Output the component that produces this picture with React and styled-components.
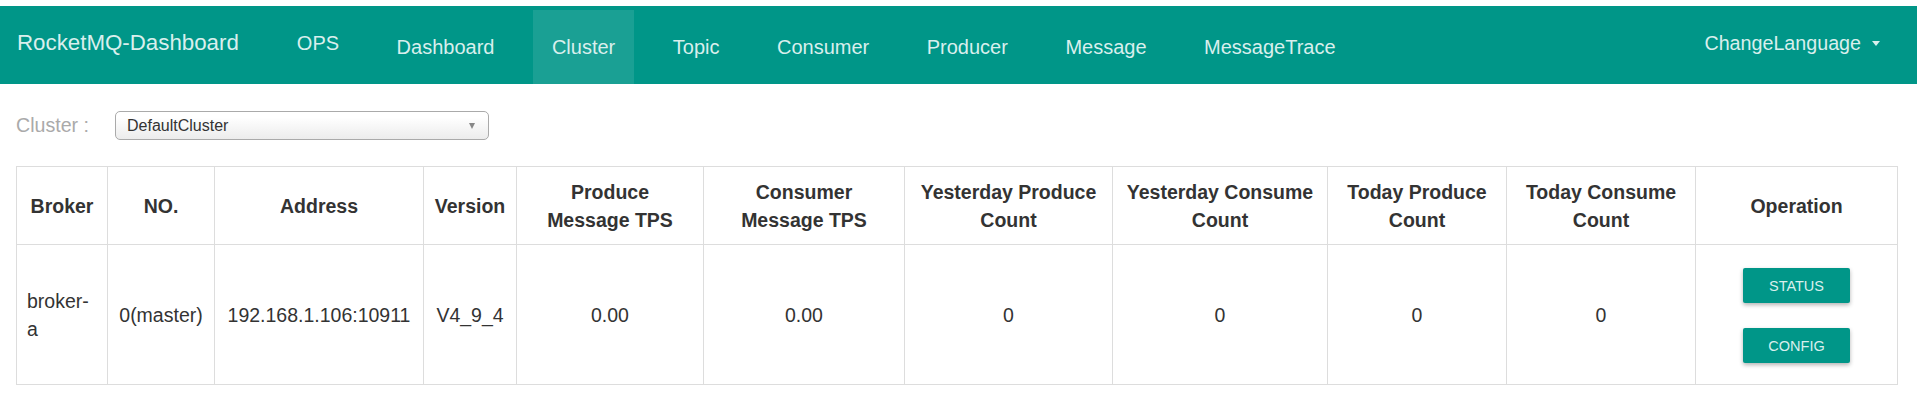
import React from "react";
import styled, { createGlobalStyle } from "styled-components";

const GlobalStyle = createGlobalStyle`
  html, body {
    margin: 0;
    padding: 0;
    background: #fff;
  }
  body {
    font-family: "Liberation Sans", Arial, Helvetica, sans-serif;
    color: #333;
  }
`;

const TEAL = "#009688";
const MINT = "#d9efed";

const Page = styled.div`
  padding-top: 6px;
`;

const Navbar = styled.nav`
  display: flex;
  align-items: stretch;
  height: 78px;
  background: ${TEAL};
  padding: 0 37px 0 17px;
`;

const Brand = styled.a`
  display: flex;
  align-items: center;
  padding-bottom: 4px;
  margin-right: 39px;
  font-size: 22.3px;
  color: ${MINT};
  white-space: nowrap;
`;

const NavList = styled.ul`
  display: flex;
  gap: 19.5px;
  list-style: none;
  margin: 4px 0 0;
  padding: 0;
`;

const NavItem = styled.li`
  display: flex;
  align-items: center;
  padding: 0 19px ${(p) => (p.$raised ? "8px" : "0")};
  font-size: 20px;
  color: ${MINT};
  background: ${(p) => (p.$active ? "rgba(255,255,255,0.1)" : "transparent")};
  white-space: nowrap;
`;

const LangMenu = styled.div`
  margin-left: auto;
  display: flex;
  align-items: center;
  gap: 11px;
  padding-bottom: 4px;
  font-size: 19.7px;
  color: ${MINT};
`;

const Caret = styled.span`
  width: 0;
  height: 0;
  border-left: 4.5px solid transparent;
  border-right: 4.5px solid transparent;
  border-top: 5px solid ${MINT};
`;

const FilterRow = styled.div`
  display: flex;
  align-items: center;
  margin: 27px 0 0 16px;
`;

const FilterLabel = styled.label`
  width: 99px;
  font-size: 19.6px;
  color: #aaa;
`;

const SelectBox = styled.div`
  box-sizing: border-box;
  display: flex;
  align-items: center;
  justify-content: space-between;
  width: 374px;
  height: 29px;
  padding: 0 13px 0 11px;
  border: 1px solid #aaa;
  border-radius: 5px;
  background: linear-gradient(to bottom, #ffffff 20%, #ececec 100%);
  font-size: 16px;
  color: #333;
`;

const SelectArrow = styled.span`
  width: 0;
  height: 0;
  border-left: 3.5px solid transparent;
  border-right: 3.5px solid transparent;
  border-top: 6px solid #888;
`;

const Table = styled.table`
  width: 1881px;
  margin: 26px 0 0 16px;
  border-collapse: collapse;
  table-layout: fixed;
  font-size: 19.5px;
  line-height: 28px;
`;

const HeadCell = styled.th`
  padding: 11px 10px 10px;
  border: 1px solid #ddd;
  font-weight: bold;
  text-align: center;
  vertical-align: middle;
  color: #333;
  white-space: nowrap;
`;

const Cell = styled.td`
  padding: 8px 10px;
  border: 1px solid #ddd;
  text-align: ${(p) => (p.$left ? "left" : "center")};
  vertical-align: middle;
  color: #333;
`;

const ButtonStack = styled.div`
  display: flex;
  flex-direction: column;
  align-items: center;
  gap: 25px;
  padding: 15px 0 13px;
`;

const OpButton = styled.button`
  width: 107px;
  height: 35px;
  border: none;
  border-radius: 2px;
  background: ${TEAL};
  color: ${MINT};
  font-family: "Liberation Sans", Arial, sans-serif;
  font-size: 14.5px;
  box-shadow: 0 2px 4px rgba(0, 0, 0, 0.3);
  cursor: pointer;
`;

const navLinks = [
  { label: "OPS", raised: true },
  { label: "Dashboard" },
  { label: "Cluster", active: true },
  { label: "Topic" },
  { label: "Consumer" },
  { label: "Producer" },
  { label: "Message" },
  { label: "MessageTrace" },
];

const columns = [
  { title: ["Broker"], width: 91 },
  { title: ["NO."], width: 107 },
  { title: ["Address"], width: 209 },
  { title: ["Version"], width: 93 },
  { title: ["Produce", "Message TPS"], width: 187 },
  { title: ["Consumer", "Message TPS"], width: 201 },
  { title: ["Yesterday Produce", "Count"], width: 208 },
  { title: ["Yesterday Consume", "Count"], width: 215 },
  { title: ["Today Produce", "Count"], width: 179 },
  { title: ["Today Consume", "Count"], width: 189 },
  { title: ["Operation"], width: 202 },
];

const brokers = [
  {
    name: "broker-a",
    no: "0(master)",
    address: "192.168.1.106:10911",
    version: "V4_9_4",
    produceTps: "0.00",
    consumeTps: "0.00",
    yesterdayProduce: 0,
    yesterdayConsume: 0,
    todayProduce: 0,
    todayConsume: 0,
  },
];

export default function App() {
  return (
    <Page>
      <GlobalStyle />
      <Navbar>
        <Brand>RocketMQ-Dashboard</Brand>
        <NavList>
          {navLinks.map((link) => (
            <NavItem key={link.label} $active={link.active} $raised={link.raised}>
              {link.label}
            </NavItem>
          ))}
        </NavList>
        <LangMenu>
          ChangeLanguage
          <Caret />
        </LangMenu>
      </Navbar>

      <FilterRow>
        <FilterLabel>Cluster :</FilterLabel>
        <SelectBox>
          <span>DefaultCluster</span>
          <SelectArrow />
        </SelectBox>
      </FilterRow>

      <Table>
        <colgroup>
          {columns.map((c) => (
            <col key={c.title.join(" ")} style={{ width: c.width }} />
          ))}
        </colgroup>
        <thead>
          <tr>
            {columns.map((c) => (
              <HeadCell key={c.title.join(" ")}>
                {c.title.map((line, i) => (
                  <React.Fragment key={line}>
                    {i > 0 && <br />}
                    {line}
                  </React.Fragment>
                ))}
              </HeadCell>
            ))}
          </tr>
        </thead>
        <tbody>
          {brokers.map((b) => (
            <tr key={b.name}>
              <Cell $left>{b.name}</Cell>
              <Cell>{b.no}</Cell>
              <Cell>{b.address}</Cell>
              <Cell>{b.version}</Cell>
              <Cell>{b.produceTps}</Cell>
              <Cell>{b.consumeTps}</Cell>
              <Cell>{b.yesterdayProduce}</Cell>
              <Cell>{b.yesterdayConsume}</Cell>
              <Cell>{b.todayProduce}</Cell>
              <Cell>{b.todayConsume}</Cell>
              <Cell>
                <ButtonStack>
                  <OpButton>STATUS</OpButton>
                  <OpButton>CONFIG</OpButton>
                </ButtonStack>
              </Cell>
            </tr>
          ))}
        </tbody>
      </Table>
    </Page>
  );
}
